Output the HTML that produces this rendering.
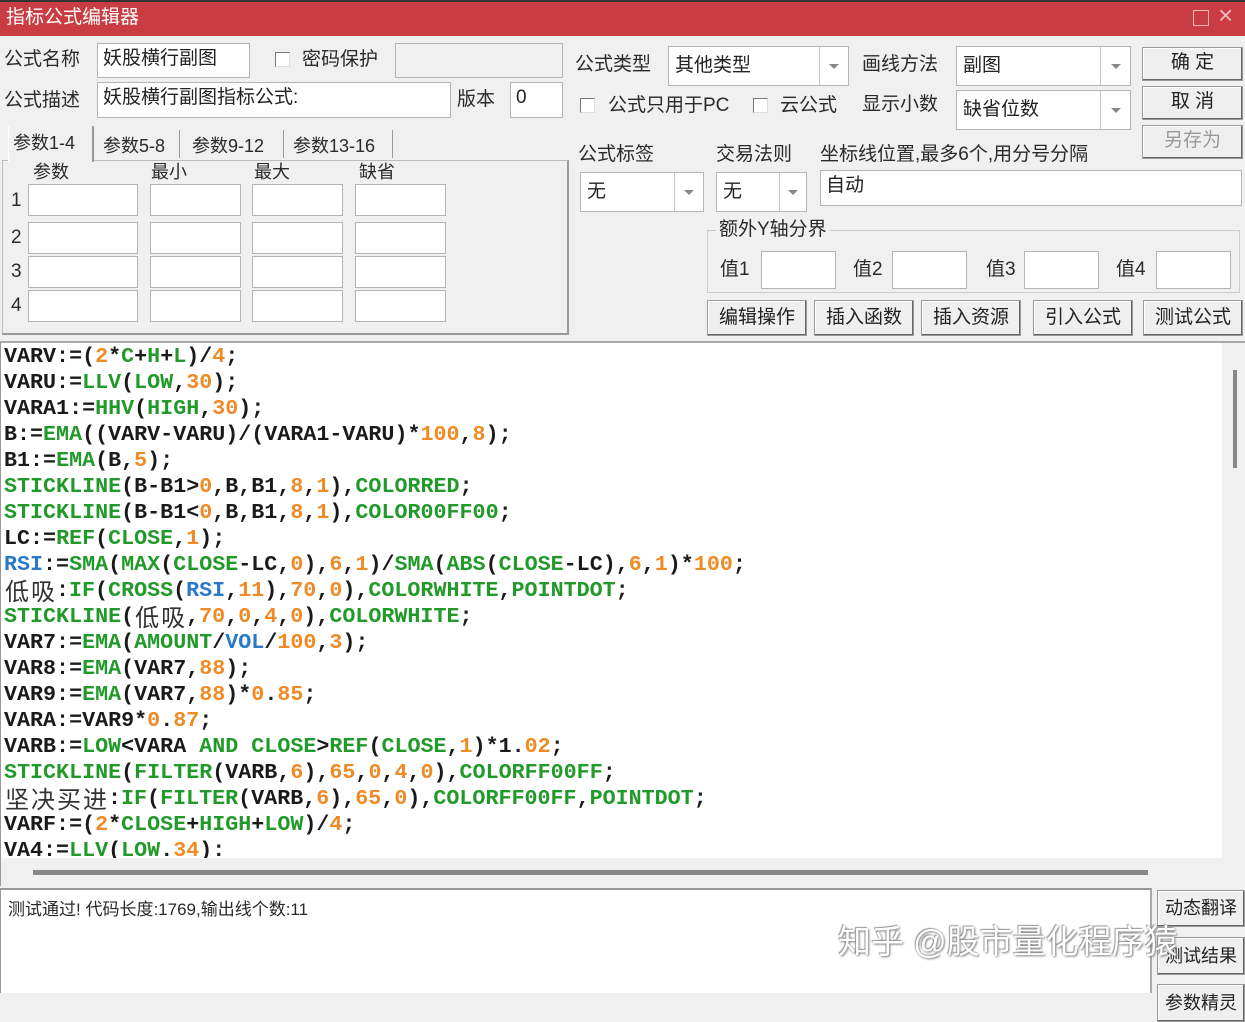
<!DOCTYPE html>
<html><head><meta charset="utf-8">
<style>
*{box-sizing:border-box;margin:0;padding:0}
body{width:1245px;height:993px;overflow:hidden;background:#f0f0f0;position:relative;font-family:"Liberation Sans","Noto Sans CJK SC",sans-serif;color:#222}
.a{position:absolute}
.t{position:absolute;font-size:19px;line-height:24px;white-space:nowrap;color:#2a2a2a}
.in{position:absolute;background:#fff;border:1px solid #b4b4b4;font-size:19px;line-height:30px;padding-left:5px;white-space:nowrap;color:#222}
.cb{position:absolute;width:15px;height:15px;border:1px solid #777;background:#fff;border-right-color:#ddd;border-bottom-color:#ddd}
.combo{position:absolute;background:#fff;border:1px solid #b4b4b4;font-size:19px;padding-left:6px;white-space:nowrap}
.combo .ar{position:absolute;top:0;bottom:0;right:0;border-left:1px solid #c8c8c8}
.combo .ar:after{content:"";position:absolute;left:50%;top:50%;margin:-2px 0 0 -5px;border:5px solid transparent;border-top:5px solid #888;border-bottom:0}
.btn{position:absolute;background:#efefef;border:1px solid #9a9a9a;box-shadow:inset -1px -1px 0 #666,inset 1px 1px 0 #fff;font-size:19px;text-align:center;white-space:nowrap;color:#222}
.code{position:absolute;left:0;top:341px;width:1222px;height:517px;background:#fff;overflow:hidden;border-top:2px solid #aaa;border-left:1px solid #999}
.code .l{height:26px;overflow:hidden;white-space:pre;font-family:"Liberation Mono",monospace;font-weight:bold;font-size:21.7px;line-height:26px;color:#1a1a1a}
.code .w{position:absolute;left:3px;top:1px}
.g{color:#229a2a}.o{color:#f08a25}.b{color:#2a78c8}
.c{display:inline-block;width:26px;height:26px;vertical-align:top;font-family:"Noto Sans CJK SC",sans-serif;font-weight:normal;font-size:24px;color:#333;text-align:center;line-height:24px}
</style></head><body>
<div class="a" style="left:0;top:0;width:1245px;height:36px;background:#c93c41;border-top:2px solid #333"></div>
<div class="t" style="left:6px;top:6px;color:#fff;font-size:19px">指标公式编辑器</div>
<div class="a" style="left:1193px;top:10px;width:16px;height:16px;border:1.5px solid #f2b8ba"></div>
<div class="t" style="left:1218px;top:3px;color:#f2b8ba;font-size:26px">×</div>

<div class="t" style="left:4px;top:48px">公式名称</div>
<div class="in" style="left:97px;top:43px;width:153px;height:35px">妖股横行副图</div>
<div class="cb" style="left:275px;top:52px"></div>
<div class="t" style="left:302px;top:48px">密码保护</div>
<div class="in" style="left:395px;top:43px;width:168px;height:35px;background:#f0f0f0"></div>
<div class="t" style="left:4px;top:89px">公式描述</div>
<div class="in" style="left:97px;top:82px;width:354px;height:36px">妖股横行副图指标公式:</div>
<div class="t" style="left:457px;top:88px">版本</div>
<div class="in" style="left:510px;top:82px;width:53px;height:36px">0</div>

<div class="a" style="left:2px;top:160px;width:567px;height:175px;border:1px solid #bbb;border-right:2px solid #999;border-bottom:2px solid #999"></div>
<div class="a" style="left:8px;top:126px;width:86px;height:36px;background:#f0f0f0;border-right:2px solid #999;border-left:1px solid #fff"></div>
<div class="t" style="left:13px;top:131px;font-size:18px">参数1-4</div>
<div class="t" style="left:103px;top:134px;font-size:18px">参数5-8</div>
<div class="a" style="left:179px;top:130px;width:1px;height:28px;background:#999"></div>
<div class="t" style="left:192px;top:134px;font-size:18px">参数9-12</div>
<div class="a" style="left:283px;top:130px;width:1px;height:28px;background:#999"></div>
<div class="t" style="left:293px;top:134px;font-size:18px">参数13-16</div>
<div class="a" style="left:392px;top:130px;width:1px;height:28px;background:#999"></div>
<div class="t" style="left:33px;top:160px;font-size:18px">参数</div>
<div class="t" style="left:151px;top:160px;font-size:18px">最小</div>
<div class="t" style="left:254px;top:160px;font-size:18px">最大</div>
<div class="t" style="left:359px;top:160px;font-size:18px">缺省</div>
<div class="t" style="left:11px;top:189px">1</div>
<div class="t" style="left:11px;top:226px">2</div>
<div class="t" style="left:11px;top:260px">3</div>
<div class="t" style="left:11px;top:294px">4</div>
<div class="in" style="left:28px;top:184px;width:110px;height:32px"></div><div class="in" style="left:150px;top:184px;width:91px;height:32px"></div><div class="in" style="left:252px;top:184px;width:91px;height:32px"></div><div class="in" style="left:355px;top:184px;width:91px;height:32px"></div>
<div class="in" style="left:28px;top:222px;width:110px;height:32px"></div><div class="in" style="left:150px;top:222px;width:91px;height:32px"></div><div class="in" style="left:252px;top:222px;width:91px;height:32px"></div><div class="in" style="left:355px;top:222px;width:91px;height:32px"></div>
<div class="in" style="left:28px;top:256px;width:110px;height:32px"></div><div class="in" style="left:150px;top:256px;width:91px;height:32px"></div><div class="in" style="left:252px;top:256px;width:91px;height:32px"></div><div class="in" style="left:355px;top:256px;width:91px;height:32px"></div>
<div class="in" style="left:28px;top:290px;width:110px;height:32px"></div><div class="in" style="left:150px;top:290px;width:91px;height:32px"></div><div class="in" style="left:252px;top:290px;width:91px;height:32px"></div><div class="in" style="left:355px;top:290px;width:91px;height:32px"></div>

<div class="t" style="left:575px;top:53px">公式类型</div>
<div class="combo" style="left:668px;top:46px;width:181px;height:40px;line-height:38px">其他类型<span class="ar" style="width:29px"></span></div>
<div class="t" style="left:862px;top:53px">画线方法</div>
<div class="combo" style="left:956px;top:46px;width:175px;height:40px;line-height:38px">副图<span class="ar" style="width:30px"></span></div>
<div class="btn" style="left:1142px;top:47px;width:101px;height:34px;line-height:30px">确 定</div>
<div class="cb" style="left:580px;top:98px"></div>
<div class="t" style="left:608px;top:94px">公式只用于PC</div>
<div class="cb" style="left:753px;top:98px"></div>
<div class="t" style="left:780px;top:94px">云公式</div>
<div class="t" style="left:862px;top:93px">显示小数</div>
<div class="combo" style="left:956px;top:90px;width:175px;height:40px;line-height:38px">缺省位数<span class="ar" style="width:30px"></span></div>
<div class="btn" style="left:1142px;top:86px;width:101px;height:34px;line-height:30px">取 消</div>
<div class="btn" style="left:1142px;top:125px;width:101px;height:34px;line-height:30px;color:#999">另存为</div>

<div class="t" style="left:578px;top:143px">公式标签</div>
<div class="t" style="left:716px;top:143px">交易法则</div>
<div class="t" style="left:820px;top:143px">坐标线位置,最多6个,用分号分隔</div>
<div class="combo" style="left:580px;top:172px;width:124px;height:40px;line-height:38px">无<span class="ar" style="width:29px"></span></div>
<div class="combo" style="left:716px;top:172px;width:91px;height:40px;line-height:38px">无<span class="ar" style="width:27px"></span></div>
<div class="in" style="left:820px;top:170px;width:422px;height:36px">自动</div>
<div class="a" style="left:707px;top:230px;width:533px;height:63px;border:1px solid #ccc"></div>
<div class="t" style="left:716px;top:218px;background:#f0f0f0;padding:0 3px">额外Y轴分界</div>
<div class="t" style="left:720px;top:258px">值1</div><div class="in" style="left:761px;top:251px;width:75px;height:38px"></div>
<div class="t" style="left:853px;top:258px">值2</div><div class="in" style="left:892px;top:251px;width:75px;height:38px"></div>
<div class="t" style="left:986px;top:258px">值3</div><div class="in" style="left:1024px;top:251px;width:75px;height:38px"></div>
<div class="t" style="left:1116px;top:258px">值4</div><div class="in" style="left:1156px;top:251px;width:75px;height:38px"></div>
<div class="btn" style="left:707px;top:300px;width:100px;height:36px;line-height:34px">编辑操作</div>
<div class="btn" style="left:814px;top:300px;width:100px;height:36px;line-height:34px">插入函数</div>
<div class="btn" style="left:921px;top:300px;width:100px;height:36px;line-height:34px">插入资源</div>
<div class="btn" style="left:1033px;top:300px;width:100px;height:36px;line-height:34px">引入公式</div>
<div class="btn" style="left:1143px;top:300px;width:100px;height:36px;line-height:34px">测试公式</div>

<div class="code"><div class="w">
<div class="l">VARV:=(<span class="o">2</span>*<span class="g">C</span>+<span class="g">H</span>+<span class="g">L</span>)/<span class="o">4</span>;</div>
<div class="l">VARU:=<span class="g">LLV</span>(<span class="g">LOW</span>,<span class="o">30</span>);</div>
<div class="l">VARA1:=<span class="g">HHV</span>(<span class="g">HIGH</span>,<span class="o">30</span>);</div>
<div class="l">B:=<span class="g">EMA</span>((VARV-VARU)/(VARA1-VARU)*<span class="o">100</span>,<span class="o">8</span>);</div>
<div class="l">B1:=<span class="g">EMA</span>(B,<span class="o">5</span>);</div>
<div class="l"><span class="g">STICKLINE</span>(B-B1&gt;<span class="o">0</span>,B,B1,<span class="o">8</span>,<span class="o">1</span>),<span class="g">COLORRED</span>;</div>
<div class="l"><span class="g">STICKLINE</span>(B-B1&lt;<span class="o">0</span>,B,B1,<span class="o">8</span>,<span class="o">1</span>),<span class="g">COLOR00FF00</span>;</div>
<div class="l">LC:=<span class="g">REF</span>(<span class="g">CLOSE</span>,<span class="o">1</span>);</div>
<div class="l"><span class="b">RSI</span>:=<span class="g">SMA</span>(<span class="g">MAX</span>(<span class="g">CLOSE</span>-LC,<span class="o">0</span>),<span class="o">6</span>,<span class="o">1</span>)/<span class="g">SMA</span>(<span class="g">ABS</span>(<span class="g">CLOSE</span>-LC),<span class="o">6</span>,<span class="o">1</span>)*<span class="o">100</span>;</div>
<div class="l"><span class="c">低</span><span class="c">吸</span>:<span class="g">IF</span>(<span class="g">CROSS</span>(<span class="b">RSI</span>,<span class="o">11</span>),<span class="o">70</span>,<span class="o">0</span>),<span class="g">COLORWHITE</span>,<span class="g">POINTDOT</span>;</div>
<div class="l"><span class="g">STICKLINE</span>(<span class="c">低</span><span class="c">吸</span>,<span class="o">70</span>,<span class="o">0</span>,<span class="o">4</span>,<span class="o">0</span>),<span class="g">COLORWHITE</span>;</div>
<div class="l">VAR7:=<span class="g">EMA</span>(<span class="g">AMOUNT</span>/<span class="b">VOL</span>/<span class="o">100</span>,<span class="o">3</span>);</div>
<div class="l">VAR8:=<span class="g">EMA</span>(VAR7,<span class="o">88</span>);</div>
<div class="l">VAR9:=<span class="g">EMA</span>(VAR7,<span class="o">88</span>)*<span class="o">0</span>.<span class="o">85</span>;</div>
<div class="l">VARA:=VAR9*<span class="o">0</span>.<span class="o">87</span>;</div>
<div class="l">VARB:=<span class="g">LOW</span>&lt;VARA <span class="g">AND</span> <span class="g">CLOSE</span>&gt;<span class="g">REF</span>(<span class="g">CLOSE</span>,<span class="o">1</span>)*1.<span class="o">02</span>;</div>
<div class="l"><span class="g">STICKLINE</span>(<span class="g">FILTER</span>(VARB,<span class="o">6</span>),<span class="o">65</span>,<span class="o">0</span>,<span class="o">4</span>,<span class="o">0</span>),<span class="g">COLORFF00FF</span>;</div>
<div class="l"><span class="c">坚</span><span class="c">决</span><span class="c">买</span><span class="c">进</span>:<span class="g">IF</span>(<span class="g">FILTER</span>(VARB,<span class="o">6</span>),<span class="o">65</span>,<span class="o">0</span>),<span class="g">COLORFF00FF</span>,<span class="g">POINTDOT</span>;</div>
<div class="l">VARF:=(<span class="o">2</span>*<span class="g">CLOSE</span>+<span class="g">HIGH</span>+<span class="g">LOW</span>)/<span class="o">4</span>;</div>
<div class="l">VA4:=<span class="g">LLV</span>(<span class="g">LOW</span>.<span class="o">34</span>):</div>
</div></div>
<div class="a" style="left:1222px;top:341px;width:23px;height:517px;background:#f0f0f0;border-top:2px solid #aaa"></div>
<div class="a" style="left:1233px;top:370px;width:4px;height:98px;background:#888"></div>
<div class="a" style="left:0;top:858px;width:1245px;height:28px;background:#f0f0f0;border-left:1px solid #999"></div>
<div class="a" style="left:33px;top:870px;width:1115px;height:5px;background:#888"></div>

<div class="a" style="left:0;top:888px;width:1152px;height:105px;background:#fff;border-top:2px solid #999;border-left:1px solid #999;border-right:2px solid #aaa"></div>
<div class="t" style="left:8px;top:898px;font-size:17px">测试通过! 代码长度:1769,输出线个数:11</div>
<div class="btn" style="left:1157px;top:890px;width:88px;height:37px;line-height:34px;font-size:18px">动态翻译</div>
<div class="btn" style="left:1157px;top:937px;width:88px;height:38px;line-height:36px;font-size:18px">测试结果</div>
<div class="btn" style="left:1157px;top:984px;width:88px;height:38px;line-height:36px;font-size:18px">参数精灵</div>
<div class="t" style="left:838px;top:922px;font-size:33px;line-height:40px;color:#fff;text-shadow:1px 1px 2px #777,-1px -1px 1px #999">知乎 @股市量化程序猿</div>
</body></html>
